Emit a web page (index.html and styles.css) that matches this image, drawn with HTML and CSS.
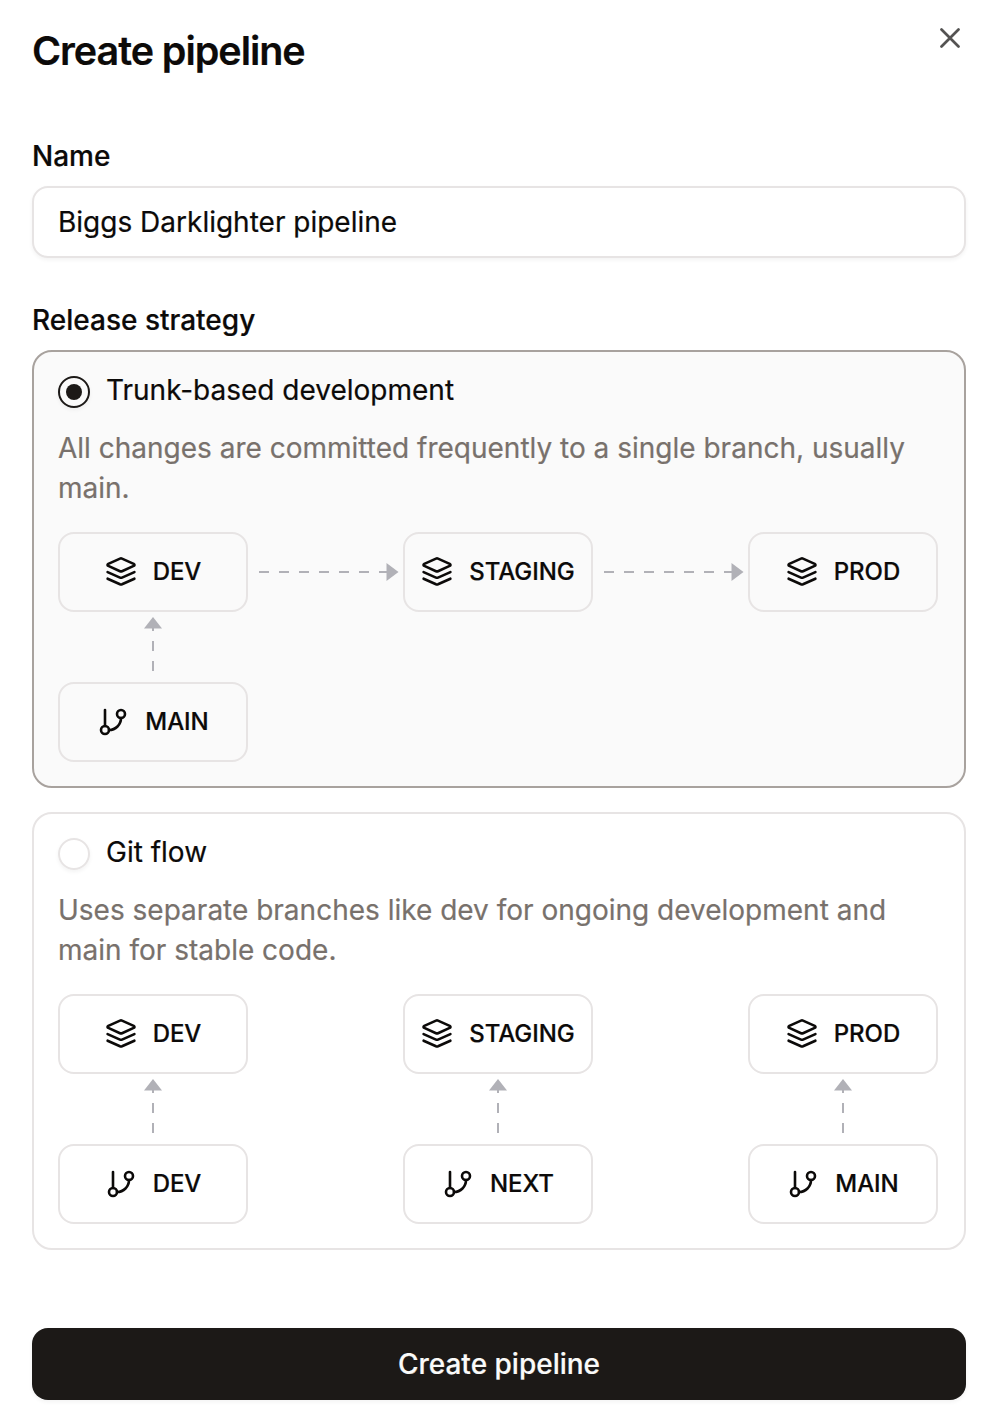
FILE: index.html
```html
<!DOCTYPE html>
<html lang="en">
<head>
<meta charset="utf-8">
<title>Create pipeline</title>
<link rel="stylesheet" href="styles.css">
</head>
<body>
<svg class="defs" width="0" height="0" aria-hidden="true">
  <symbol id="layers" viewBox="0 0 32 32">
    <path d="M15 2.600Q16 2.200 17 2.600L28.700 7.900Q30.300 8.900 28.700 9.900L17 15.200Q16 15.600 15 15.200L3.300 9.900Q1.700 8.900 3.300 7.900Z"/>
    <path d="M2.600 16.100 15 21.600Q16 22 17 21.600L29.400 16.100"/>
    <path d="M2.600 22.700 15 28.300Q16 28.700 17 28.300L29.400 22.700"/>
  </symbol>
  <symbol id="branch" viewBox="0 0 32 32">
    <path d="M8 4V20"/>
    <circle cx="8" cy="24" r="4"/>
    <circle cx="24" cy="8" r="4"/>
    <path d="M24 12A12 12 0 0 1 12 24"/>
  </symbol>
  <symbol id="arrow-right" viewBox="0 0 155 80">
    <path class="dash" d="M11 40H142"/>
    <path class="head" d="M138.500 31V49L150.500 40Z"/>
  </symbol>
  <symbol id="arrow-up" viewBox="0 0 190 70">
    <path class="dash" d="M95 59V9"/>
    <path class="head" d="M86 16.500H104L95 5Z"/>
  </symbol>
</svg>
<main class="dialog">
  <header class="header">
    <h1 class="title">Create pipeline</h1>
    <button class="close" aria-label="Close"><svg width="20" height="20" viewBox="0 0 20 20"><path d="M1.500 1.500 18.500 18.500M18.500 1.500 1.500 18.500"/></svg></button>
  </header>
  <label class="label" for="name">Name</label>
  <input class="input" id="name" value="Biggs Darklighter pipeline">
  <div class="label">Release strategy</div>
  <section class="card selected">
    <div class="option"><span class="radio"></span><span>Trunk-based development</span></div>
    <p class="description">All changes are committed frequently to a single branch, usually main.</p>
    <div class="flow">
      <div class="node"><svg class="icon"><use href="#layers"/></svg>DEV</div>
      <svg class="right"><use href="#arrow-right"/></svg>
      <div class="node"><svg class="icon"><use href="#layers"/></svg>STAGING</div>
      <svg class="right"><use href="#arrow-right"/></svg>
      <div class="node"><svg class="icon"><use href="#layers"/></svg>PROD</div>
      <svg class="up"><use href="#arrow-up"/></svg>
      <div class="node source"><svg class="icon"><use href="#branch"/></svg>MAIN</div>
    </div>
  </section>
  <section class="card">
    <div class="option"><span class="radio"></span><span>Git flow</span></div>
    <p class="description">Uses separate branches like dev for ongoing development and main for stable code.</p>
    <div class="flow columns">
      <div class="column">
        <div class="node"><svg class="icon"><use href="#layers"/></svg>DEV</div>
        <svg class="up"><use href="#arrow-up"/></svg>
        <div class="node"><svg class="icon"><use href="#branch"/></svg>DEV</div>
      </div>
      <div class="column">
        <div class="node"><svg class="icon"><use href="#layers"/></svg>STAGING</div>
        <svg class="up"><use href="#arrow-up"/></svg>
        <div class="node"><svg class="icon"><use href="#branch"/></svg>NEXT</div>
      </div>
      <div class="column">
        <div class="node"><svg class="icon"><use href="#layers"/></svg>PROD</div>
        <svg class="up"><use href="#arrow-up"/></svg>
        <div class="node"><svg class="icon"><use href="#branch"/></svg>MAIN</div>
      </div>
    </div>
  </section>
  <button class="submit">Create pipeline</button>
</main>
</body>
</html>
```

FILE: styles.css
```css
* { box-sizing: border-box; }

body {
  margin: 0;
  background: #fff;
  color: #0c0a09;
  font: 400 28px/40px Inter, "Liberation Sans", sans-serif;
  -webkit-text-stroke: 0.2px;
}

.defs { display: none; }
svg { display: block; }

.dialog {
  display: flex;
  flex-direction: column;
  width: 990px;
  height: 1426px;
  padding: 28px 24px 26px 32px;
}

.header {
  display: flex;
  justify-content: space-between;
  align-items: flex-start;
  height: 108px;
}

.title {
  margin: 0;
  font-size: 39.5px;
  line-height: 47px;
  font-weight: 600;
  letter-spacing: -1.05px;
}

.close {
  padding: 0;
  margin: 0 6px 0 0;
  border: 0;
  background: none;
}

.close path {
  fill: none;
  stroke: #545352;
  stroke-width: 2.7;
  stroke-linecap: round;
}

.label {
  height: 50px;
  font-weight: 500;
}

.input {
  width: 934px;
  height: 72px;
  margin: 0 0 42px;
  padding: 0 24px;
  border: 2px solid #e7e4e4;
  border-radius: 16px;
  outline: 0;
  background: #fff;
  color: inherit;
  font: inherit;
  box-shadow: 0 2px 4px rgb(0 0 0 / 5%);
}

.card {
  width: 934px;
  height: 438px;
  margin-bottom: 24px;
  padding: 18px 24px 24px;
  border: 2px solid #e7e4e4;
  border-radius: 20px;
}

.card.selected {
  border-color: #a8a29e;
  background: #fafafa;
}

.option {
  display: flex;
  gap: 16px;
  height: 40px;
}

.radio {
  display: grid;
  place-items: center;
  width: 32px;
  height: 32px;
  margin-top: 6px;
  border: 2px solid #e7e4e4;
  border-radius: 50%;
  box-shadow: 0 2px 4px rgb(0 0 0 / 5%);
}

.selected .radio { border-color: #1c1917; }

.selected .radio::after {
  content: "";
  width: 16px;
  height: 16px;
  border-radius: 50%;
  background: #1c1917;
}

.description {
  margin: 18px 0 22px;
  width: 870px;
  height: 82px;
  color: #78716c;
}

.flow {
  display: grid;
  grid-template-columns: 190px 155px 190px 155px 190px;
  grid-template-rows: 80px 70px 80px;
}

.flow.columns {
  grid-template-columns: repeat(3, 190px);
  grid-template-rows: 230px;
  column-gap: 155px;
}

.node {
  display: flex;
  align-items: center;
  justify-content: center;
  gap: 16px;
  width: 190px;
  height: 80px;
  border: 2px solid #e7e4e4;
  border-radius: 16px;
  font-size: 24px;
  font-weight: 500;
  line-height: 32px;
  letter-spacing: -0.05px;
}

.source { grid-row: 3; grid-column: 1; }
.right { width: 155px; height: 80px; }
.up { width: 190px; height: 70px; }

.icon {
  width: 32px;
  height: 32px;
  fill: none;
  stroke: #0c0a09;
  stroke-width: 2.6;
  stroke-linecap: round;
  stroke-linejoin: round;
}

.dash {
  fill: none;
  stroke: #b1b1b7;
  stroke-width: 2;
  stroke-dasharray: 10 10;
}

.head { fill: #b1b1b7; }

.submit {
  width: 934px;
  height: 72px;
  margin-top: 54px;
  padding: 0;
  border: 0;
  border-radius: 16px;
  background: #1c1917;
  color: #fafaf9;
  font: inherit;
  font-weight: 500;
  box-shadow: 0 2px 4px rgb(0 0 0 / 5%);
}
```
